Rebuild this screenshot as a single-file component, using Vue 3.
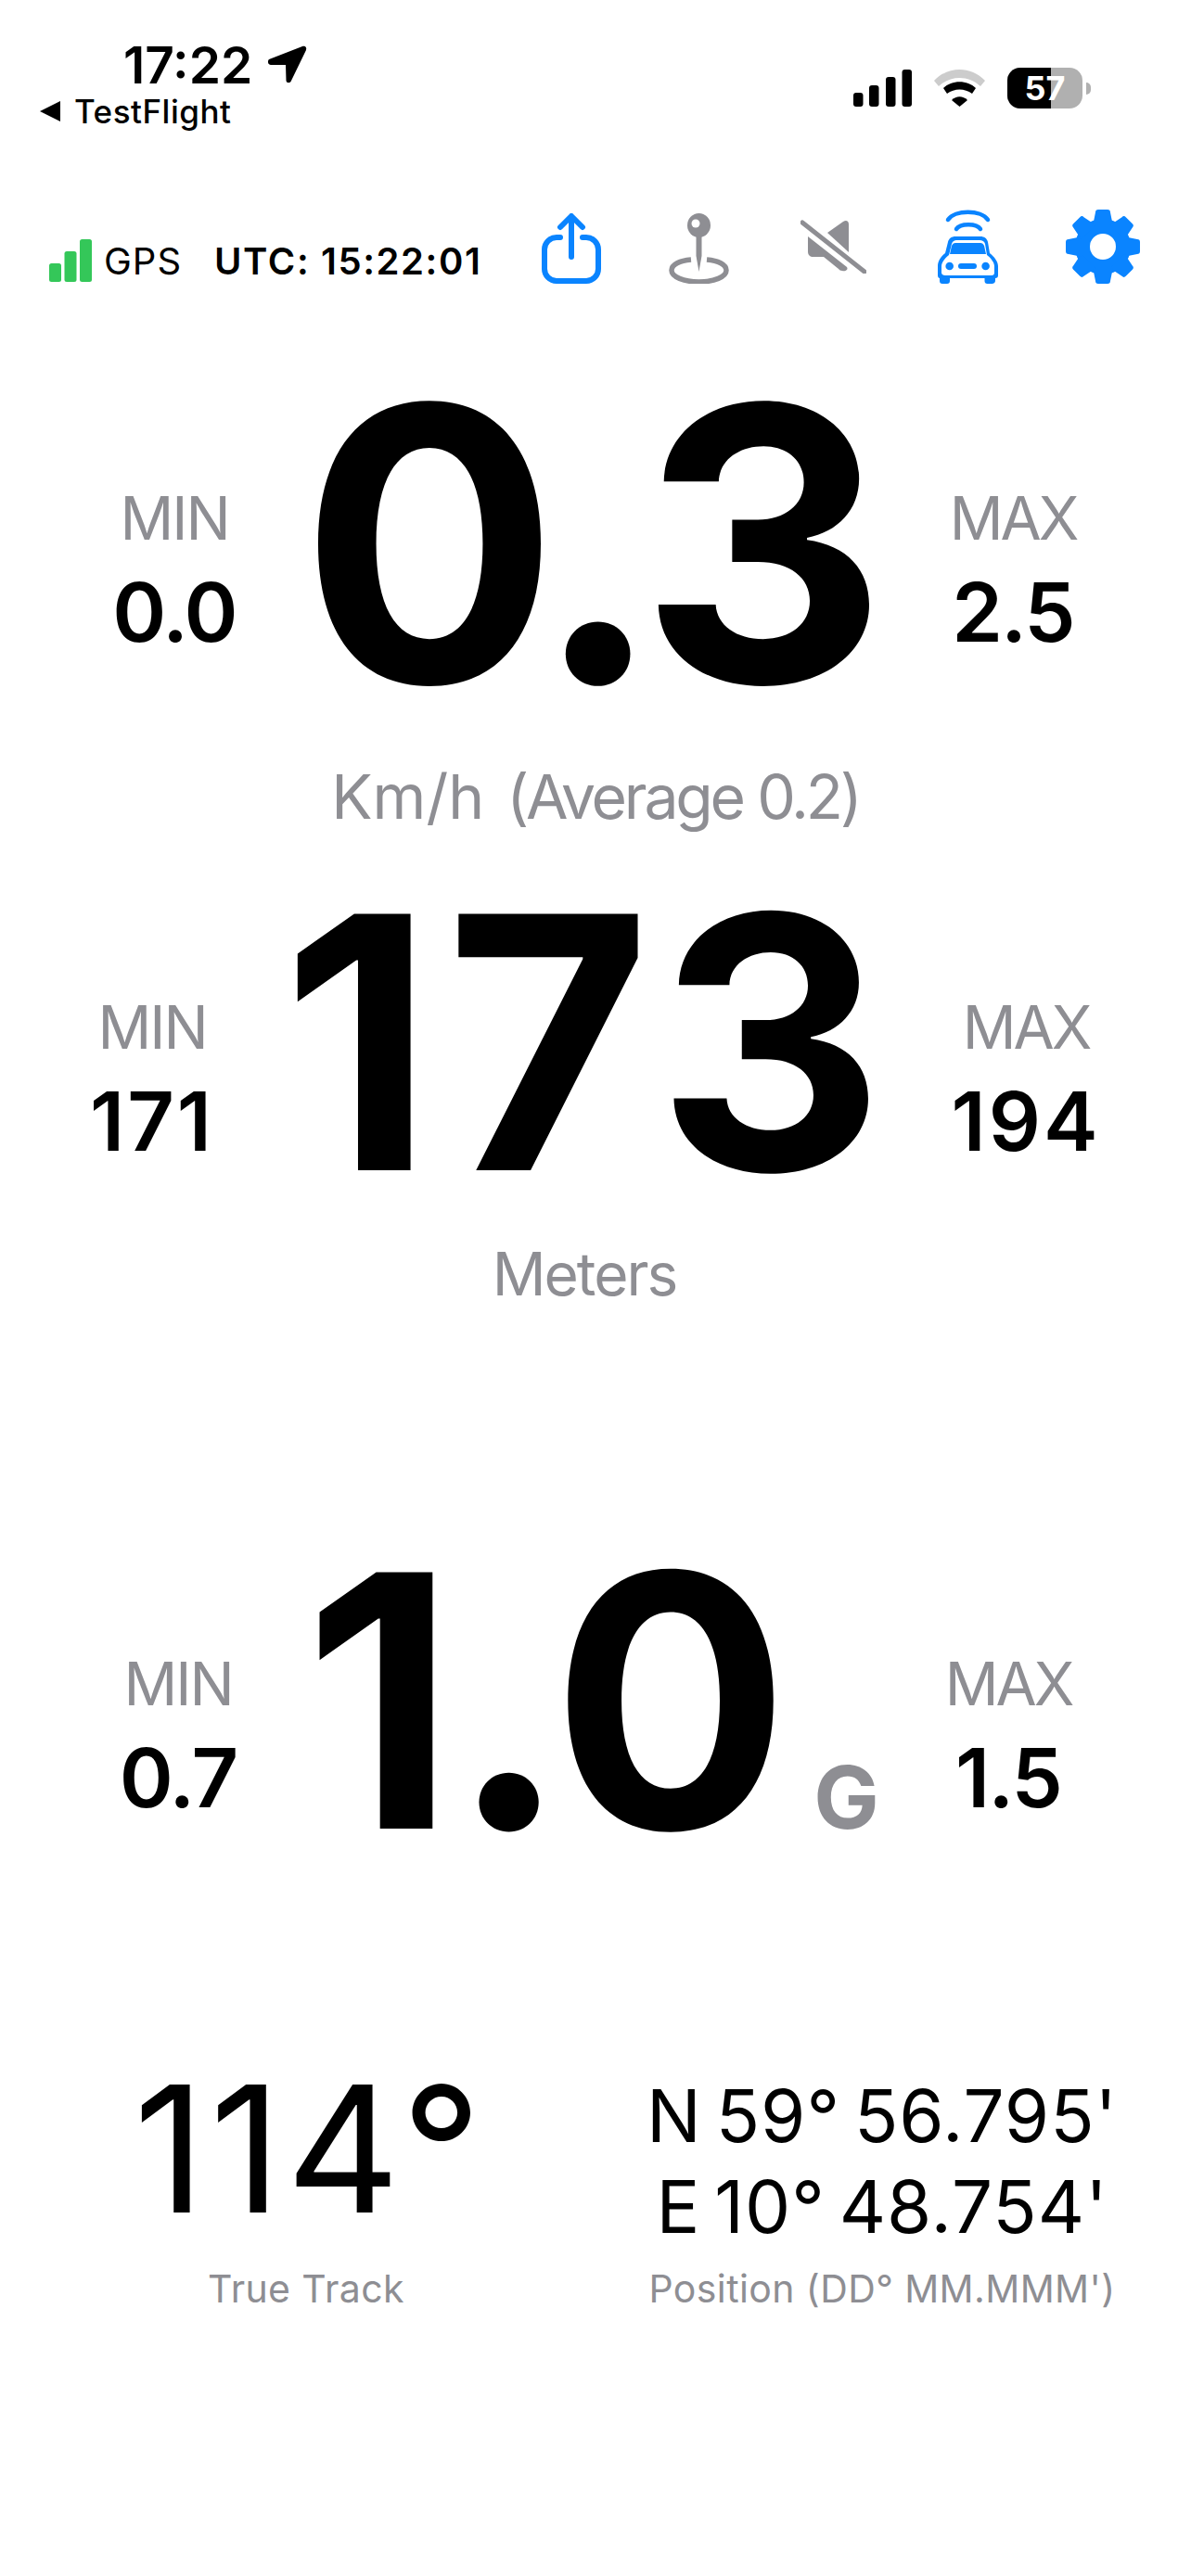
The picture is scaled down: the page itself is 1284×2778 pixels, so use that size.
<script setup>
const gauges = [
  { id: 'speed', min: '0.0', value: '0.3', max: '2.5', caption: ['Km/h', '(Average 0.2)'] },
  { id: 'alt', min: '171', value: '173', max: '194', caption: ['Meters'] },
  { id: 'g', min: '0.7', value: '1.0', max: '1.5', unit: 'G' }
]

const gearTeeth = [0, 45, 90, 135, 180, 225, 270, 315]
</script>

<template>
  <div class="screen">
    <!-- status bar -->
    <div class="status">
      <div class="status-left">
        <div class="clock">
          <span>17:22</span>
          <svg class="loc" viewBox="0 0 43 42"><path d="M2 15 38 1c3-1 5 1 4 4L26 38c-1 3-5 3-5.500 0L20 21H4c-3 0-4-4-2-6z" /></svg>
        </div>
        <div class="back"><span class="back-tri"></span>TestFlight</div>
      </div>
      <div class="status-right">
        <svg class="cell" viewBox="0 0 63 40">
          <rect x="0" y="25" width="10.500" height="15" rx="3" />
          <rect x="17" y="17" width="10.500" height="23" rx="3" />
          <rect x="35" y="8" width="10.500" height="32" rx="3" />
          <rect x="52.500" y="0" width="10.500" height="40" rx="3" />
        </svg>
        <svg class="wifi" viewBox="0 0 55 40">
          <path d="M0 12C15-4 40-4 55 12l-5 6C37 6 18 6 5 18z" fill="#ccc" />
          <path d="M10 20c9-9 26-9 35 0l-4 6c-8-6-19-6-27 0z" />
          <path d="M19 33c5-5 12-5 17 0l-8.500 7z" />
        </svg>
        <div class="battery">
          <div class="batt-body"><span class="batt-fill"></span><span class="batt-num">57</span></div>
          <span class="batt-cap"></span>
        </div>
      </div>
    </div>

    <!-- toolbar -->
    <div class="toolbar">
      <div class="gps">
        <svg class="gps-bars" viewBox="0 0 46 46">
          <rect x="0" y="26" width="13" height="20" rx="2.500" />
          <rect x="16.500" y="13" width="13" height="33" rx="2.500" />
          <rect x="33" y="0" width="13" height="46" rx="2.500" />
        </svg>
        <span class="gps-label">GPS</span>
        <span class="utc">UTC: 15:22:01</span>
      </div>
      <div class="tools">
        <svg class="share" viewBox="0 0 64 76" fill="none" stroke="#0a84ff" stroke-width="6" stroke-linecap="round" stroke-linejoin="round">
          <path d="M20 26h-4A13 13 0 0 0 3 39v21a13 13 0 0 0 13 13h32a13 13 0 0 0 13-13V39a13 13 0 0 0-13-13h-4" />
          <path d="M32 47V4M20 15 32 3l12 12" />
        </svg>
        <svg class="pin" viewBox="0 0 65 76" fill="#8e8e93">
          <ellipse cx="32.500" cy="13" rx="12.500" ry="13" />
          <circle cx="29" cy="11" r="4.500" fill="#fff" />
          <path d="M29.500 24h6v22l-3 17-3-17z" />
          <path d="M24 50C12 51 3 55 3 61.500 3 68.500 16 74 32.500 74S62 68.500 62 61.500C62 55 53 51 41 50" fill="none" stroke="#8e8e93" stroke-width="5.500" />
        </svg>
        <svg class="mute" viewBox="0 0 71 58" fill="#8e8e93">
          <path d="M29 14 46 2c3-2 6-1 6 3v30z" />
          <path d="M8 18 50 51c2 3-2 5-5 4-2 0-3-1-4-2L25 40H14c-4 0-6-2-6-6z" />
          <path d="M2 3 69 56" fill="none" stroke="#8e8e93" stroke-width="5" stroke-linecap="round" />
        </svg>
        <svg class="car" viewBox="0 0 65 81" fill="#0a84ff">
          <path d="M11 12C18 1 47 1 54 12" fill="none" stroke="#0a84ff" stroke-width="4.500" stroke-linecap="round" />
          <path d="M20 22c4-6.500 22-6.500 26 0" fill="none" stroke="#0a84ff" stroke-width="4.500" stroke-linecap="round" />
          <path fill-rule="evenodd" d="M19 30h27c4 0 7 2 8 6l2 12c5 4 9 9 9 14v10c0 2-1 3-3 3v3c0 2-2 3-3.500 3h-5c-2 0-3-1-3-3v-3H13v3c0 2-1 3-3 3H5c-2 0-3-1-3-3v-3c-1 0-2-1-2-3V62c0-5 3-10 8-14l3-12c1-4 4-6 8-6zM20 34c-2 0-4 1-5 4l-3 12c-4 3-8 8-8 12v7c0 2 2 3 4 3h50c2 0 3-1 3-3v-7c0-4-4-9-8-12l-2-12c-1-3-3-4-6-4z" />
          <path d="M19 37h27c2 0 3 1 4 3l2 9H13l2-9c1-2 2-3 4-3z" />
          <circle cx="12.700" cy="62" r="4.300" />
          <circle cx="51.600" cy="62" r="4.300" />
          <rect x="22" y="59" width="20" height="6" rx="3" />
        </svg>
        <svg class="gear" viewBox="0 0 80 80" fill="#0a84ff">
          <circle cx="40" cy="40" r="30" />
          <path v-for="a in gearTeeth" :key="a" :transform="`rotate(${a} 40 40)`" d="M32 3a3 3 0 0 1 3-3h10a3 3 0 0 1 3 3l3 15H29z" />
          <circle cx="40" cy="40" r="14" fill="#fff" />
        </svg>
      </div>
    </div>

    <!-- gauges -->
    <template v-for="g in gauges" :key="g.id">
      <section class="gauge" :class="g.id">
        <div class="side">
          <span class="side-label">MIN</span>
          <span class="side-value">{{ g.min }}</span>
        </div>
        <div class="big">{{ g.value }}<span v-if="g.unit" class="unit">{{ g.unit }}</span></div>
        <div class="side">
          <span class="side-label">MAX</span>
          <span class="side-value">{{ g.max }}</span>
        </div>
      </section>
      <div v-if="g.caption" class="caption" :class="g.id + '-caption'">
        <span v-for="c in g.caption" :key="c">{{ c }}</span>
      </div>
    </template>

    <div class="bottom">
      <div class="track">
        <div class="track-value">114°</div>
        <div class="small-caption">True Track</div>
      </div>
      <div class="position">
        <div class="coord">N 59° 56.795'</div>
        <div class="coord">E 10° 48.754'</div>
        <div class="small-caption">Position (DD° MM.MMM')</div>
      </div>
    </div>
  </div>
</template>

<style scoped>
.screen {
  width: 1284px;
  height: 2778px;
  background: #fff;
  color: #000;
  font-family: Inter, "Noto Sans", sans-serif;
  overflow: hidden;
  display: flex;
  flex-direction: column;
}

.status {
  display: flex;
  justify-content: space-between;
  height: 225px;
  flex: none;
  padding: 0 108px 0 43px;
  box-sizing: border-box;
}

.status-left {
  padding-top: 39px;
}

.clock {
  display: flex;
  align-items: center;
  gap: 16px;
  margin-left: 90px;
  font-size: 55px;
  line-height: 62px;
  font-weight: 600;
}

.loc {
  width: 43px;
  height: 42px;
}

.back {
  display: flex;
  align-items: center;
  gap: 15px;
  font-size: 35px;
  line-height: 38px;
  font-weight: 500;
  letter-spacing: 0.5px;
}

.back-tri {
  width: 0;
  height: 0;
  border-style: solid;
  border-width: 11px 22px 11px 0;
  border-color: transparent #000 transparent transparent;
}

.status-right {
  display: flex;
  align-items: center;
  height: 44px;
  margin-top: 73px;
  gap: 24px;
}

.cell {
  width: 63px;
  height: 40px;
}

.wifi {
  width: 55px;
  height: 40px;
}

.battery {
  display: flex;
  align-items: center;
  gap: 4px;
}

.batt-body {
  position: relative;
  width: 81px;
  height: 44px;
  border-radius: 14px;
  background: #b0b0b0;
  overflow: hidden;
}

.batt-fill {
  position: absolute;
  left: 0;
  top: 0;
  bottom: 0;
  width: 47px;
  background: #000;
}

.batt-num {
  position: absolute;
  inset: 0;
  text-align: center;
  color: #fff;
  font-size: 36px;
  line-height: 44px;
  font-weight: 700;
}

.batt-cap {
  width: 5px;
  height: 13px;
  border-radius: 0 5px 5px 0;
  background: #b0b0b0;
}

.toolbar {
  display: flex;
  justify-content: space-between;
  align-items: flex-end;
  height: 81px;
  flex: none;
  padding: 0 55px 0 53px;
}

.gps {
  display: flex;
  align-items: center;
  height: 46px;
  margin-bottom: 2px;
}

.gps-bars {
  width: 46px;
  height: 46px;
  fill: #34c759;
}

.gps-label {
  font-size: 40px;
  letter-spacing: 1px;
  margin-left: 13px;
}

.utc {
  font-size: 40px;
  font-weight: 600;
  letter-spacing: 1.600px;
  margin-left: 35px;
}

.tools {
  display: flex;
  align-items: flex-end;
  gap: 75px;
}

.share { width: 64px; height: 76px; }
.pin { width: 65px; height: 76px; margin-left: -2px; }
.mute { width: 71px; height: 58px; margin: 0 0 11px 2px; }
.car { width: 65px; height: 81px; margin-left: 2px; }
.gear { width: 80px; height: 80px; margin-left: -2px; }

.gauge {
  display: flex;
  align-items: flex-start;
  flex: none;
}

.side {
  display: flex;
  flex-direction: column;
  align-items: center;
  gap: 16px;
  width: 200px;
  flex: none;
}

.side-label {
  font-size: 64px;
  line-height: 78px;
  letter-spacing: -2px;
  color: #8e8e93;
}

.side:last-child .side-label {
  letter-spacing: -3px;
}

.side-value {
  font-size: 88px;
  line-height: 92px;
  font-weight: 600;
  letter-spacing: -2px;
}

.big {
  font-weight: 700;
  line-height: 1;
  text-align: center;
  white-space: nowrap;
  box-sizing: border-box;
}

.speed {
  margin-top: 74px;
  padding-left: 88px;
}
.speed .side { margin-top: 140px; }
.speed .big { width: 704px; font-size: 412px; letter-spacing: -14px; padding-right: 14px; }

.alt {
  margin-top: 35px;
  padding-left: 64px;
}
.alt .side { margin-top: 135px; }
.alt .side-value { letter-spacing: 3px; }
.alt .big { width: 742px; font-size: 380px; letter-spacing: 13px; }

.g {
  margin-top: 230px;
  padding-left: 92px;
}
.g .side { margin-top: 133px; }
.g .big { width: 695px; font-size: 380px; letter-spacing: -6px; padding-right: 4px; }

.unit {
  font-size: 94px;
  letter-spacing: 0;
  color: #8e8e93;
  margin-left: 32px;
}

.caption {
  display: flex;
  justify-content: center;
  color: #8e8e93;
  font-size: 66px;
  line-height: 80px;
  flex: none;
}

.speed-caption {
  margin-top: 27px;
  gap: 24px;
  letter-spacing: -3.200px;
}

.speed-caption span:first-child {
  letter-spacing: 0;
}

.alt-caption {
  margin-top: 20px;
  padding-right: 24px;
  font-size: 64px;
  letter-spacing: -2px;
}

.bottom {
  display: flex;
  margin-top: 198px;
  padding-right: 42px;
}

.track {
  width: 660px;
  text-align: center;
}

.track-value {
  font-size: 190px;
  line-height: 190px;
  letter-spacing: 5px;
  padding-left: 8px;
}

.track .small-caption {
  margin-top: 31px;
}

.position {
  flex: 1;
  text-align: center;
  padding-top: 11px;
}

.coord {
  font-size: 78px;
  line-height: 98px;
  letter-spacing: 1px;
  word-spacing: -8px;
}

.small-caption {
  font-size: 41px;
  line-height: 50px;
  letter-spacing: 0.400px;
  color: #8e8e93;
  margin-top: 14px;
}
</style>
